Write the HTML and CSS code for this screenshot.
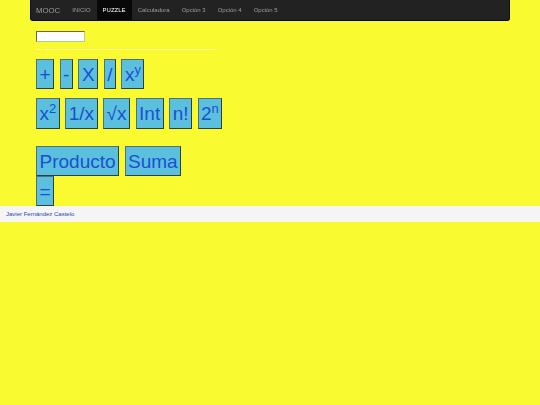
FILE: index.html
```html
<!DOCTYPE html>
<html lang="es">
<head>
<meta charset="utf-8">
<title>Puzzle</title>
<link rel="stylesheet" href="styles.css">
</head>
<body>
<nav class="navbar">
  <a class="brand" href="#">MOOC</a>
  <ul class="nav">
    <li><a href="#">INICIO</a></li>
    <li class="active"><a href="#">PUZZLE</a></li>
    <li><a href="#">Calculadora</a></li>
    <li><a href="#">Opción 3</a></li>
    <li><a href="#">Opción 4</a></li>
    <li><a href="#">Opción 5</a></li>
  </ul>
</nav>
<main class="content">
  <input class="field" type="text">
  <hr class="rule">
  <div class="row row1">
    <button class="btn">+</button>
    <button class="btn">-</button>
    <button class="btn">X</button>
    <button class="btn">/</button>
    <button class="btn">x<sup>y</sup></button>
  </div>
  <div class="row row2">
    <button class="btn tall">x<sup>2</sup></button>
    <button class="btn tall">1/x</button>
    <button class="btn tall">√x</button>
    <button class="btn tall">Int</button>
    <button class="btn tall">n!</button>
    <button class="btn tall">2<sup>n</sup></button>
  </div>
  <div class="row row3">
    <button class="btn">Producto</button>
    <button class="btn">Suma</button>
  </div>
  <div class="row row4">
    <button class="btn">=</button>
  </div>
</main>
<footer class="footer">
  <span class="author">Javier Fernández Castelo</span>
</footer>
</body>
</html>
```
FILE: styles.css
```css
html, body {
  margin: 0;
  padding: 0;
}
body {
  background: #fafa30;
  font-family: "Liberation Sans", Arial, sans-serif;
}
.navbar {
  margin: 0 30px;
  height: 21px;
  box-sizing: border-box;
  background: #222222;
  border: 1px solid #080808;
  border-top: none;
  border-radius: 0 0 3px 3px;
  display: flex;
  align-items: stretch;
  will-change: transform;
}
.brand {
  display: flex;
  align-items: center;
  padding: 0 6px 0 5px;
  font-size: 7.8px;
  color: #9d9d9d;
  text-decoration: none;
}
.nav {
  list-style: none;
  margin: 0;
  padding: 0;
  display: flex;
}
.nav li {
  display: flex;
}
.nav li a {
  display: flex;
  align-items: center;
  padding: 0 6px;
  font-size: 6px;
  color: #9d9d9d;
  text-decoration: none;
}
.nav li.active a {
  background: #080808;
  color: #ffffff;
}
.content {
  padding: 0 36px;
  display: flex;
  flex-direction: column;
  align-items: flex-start;
}
.field {
  margin: 10px 0 0;
  width: 49px;
  height: 11px;
  box-sizing: border-box;
  padding: 0;
  background: #ffffff;
  border: 1px solid #6a6a4a;
  border-right-color: #b8c8a0;
  border-bottom-color: #a8d0a0;
}
.rule {
  width: 180px;
  margin: 7px 0 9px;
  border: 0;
  border-top: 1px solid rgba(255, 255, 255, 0.45);
}
.row {
  display: flex;
  gap: 5.5px;
}
.row2 {
  margin-top: 9px;
}
.row3 {
  margin-top: 17px;
}
.btn {
  font-family: "Liberation Sans", Arial, sans-serif;
  font-size: 19px;
  line-height: 23px;
  height: 30px;
  box-sizing: border-box;
  padding: 2px 2.5px;
  margin: 0;
  color: #1c4fd0;
  background: #5bc0de;
  border: 1px solid #50707a;
  border-right-color: #2d3f44;
  border-bottom-color: #2d3f44;
}
.btn.tall {
  height: 31px;
}
.btn sup {
  font-size: 13px;
  line-height: 0;
  vertical-align: 7px;
}
.footer {
  background: #f5f5f5;
  height: 16px;
  display: flex;
  align-items: center;
  padding: 0 6px;
}
.author {
  font-size: 6px;
  color: #2a44b8;
}
```
